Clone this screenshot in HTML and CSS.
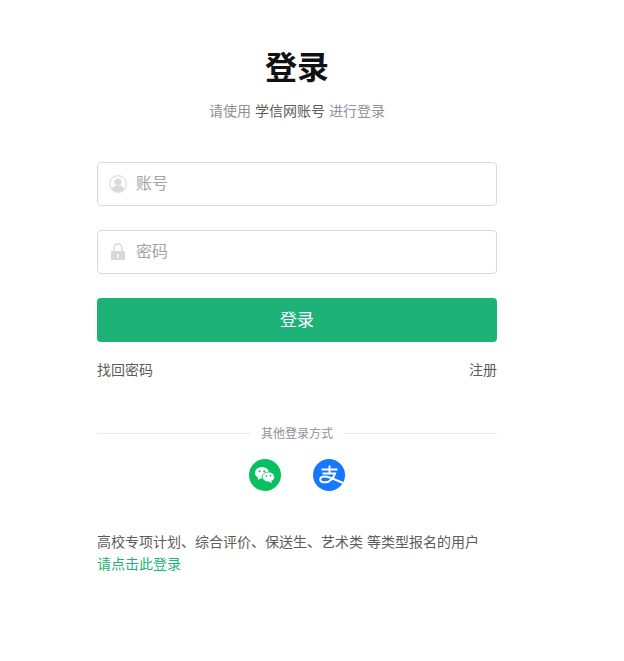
FILE: index.html
```html
<!DOCTYPE html>
<html lang="zh-CN">
<head>
    <meta charset="UTF-8">
    <meta name="viewport" content="width=device-width, initial-scale=1.0">
    <title>登录</title>
    <link rel="stylesheet" href="styles.css">
</head>
<body>
    <div class="container">
        <h1 class="title">登录</h1>
        <p class="subtitle">请使用 <span class="subtitle-strong">学信网账号</span> 进行登录</p>

        <form class="login-form">
            <label class="field">
                <svg class="field-icon field-icon-user" width="18" height="18" viewBox="0 0 18 18">
                    <circle cx="9" cy="9" r="8.300" fill="#fff" stroke="#dcdcdc" stroke-width="1.200"/>
                    <circle cx="9" cy="7" r="3.600" fill="#d9d9d9"/>
                    <path d="M2.900 14.400c.8-2.800 3.300-3.800 6.100-3.800s5.300 1 6.100 3.800A7.900 7.900 0 0 1 9 16.900a7.900 7.900 0 0 1-6.100-2.500z" fill="#d9d9d9"/>
                </svg>
                <input class="field-input" type="text" placeholder="账号">
            </label>
            <label class="field">
                <svg class="field-icon" width="18" height="18" viewBox="0 0 18 18">
                    <path d="M5 8.500V5a4 4 0 0 1 8 0v3.500" fill="none" stroke="#d9d9d9" stroke-width="1.400"/>
                    <path d="M2 8h14v9H2z" fill="#d9d9d9"/>
                    <rect x="8.200" y="11.500" width="1.600" height="3" fill="#fff"/>
                </svg>
                <input class="field-input" type="password" placeholder="密码">
            </label>
            <button class="submit-btn" type="button">登录</button>
        </form>

        <div class="links">
            <a href="#">找回密码</a>
            <a href="#">注册</a>
        </div>

        <div class="divider"><span>其他登录方式</span></div>

        <div class="socials">
            <a class="social social-wechat" href="#" aria-label="微信">
                <svg width="32" height="32" viewBox="0 0 32 32">
                    <ellipse cx="13" cy="13.800" rx="7.200" ry="5.800" fill="#fff"/>
                    <path d="M9.300 18l-.7 3 3.600-2z" fill="#fff"/>
                    <ellipse cx="19.400" cy="18" rx="6.200" ry="5" fill="#fff" stroke="#07c160" stroke-width=".8"/>
                    <path d="M22 22l1.300 2.200-3.500-1.500z" fill="#fff"/>
                    <circle cx="10.600" cy="12.200" r="1" fill="#07c160"/>
                    <circle cx="15.200" cy="12.200" r="1" fill="#07c160"/>
                    <circle cx="17.300" cy="16.800" r=".9" fill="#07c160"/>
                    <circle cx="21.500" cy="16.800" r=".9" fill="#07c160"/>
                </svg>
            </a>
            <a class="social social-alipay" href="#" aria-label="支付宝">
                <svg width="32" height="32" viewBox="0 0 32 32">
                    <path d="M8.500 10.500h16M16.500 6.500v8M9.500 14.500h12.500c-1.300 4.300-5 8.800-9.800 8.800-3 0-5-1-5-2.900 0-1.900 1.900-3 4.300-3 5 0 11 3.300 19.700 7.300" fill="none" stroke="#fff" stroke-width="2"/>
                </svg>
            </a>
        </div>

        <p class="notice">
            高校专项计划、综合评价、保送生、艺术类 等类型报名的用户<br>
            <a class="notice-link" href="#">请点击此登录</a>
        </p>
    </div>
</body>
</html>
```
FILE: styles.css
```css
* { box-sizing: border-box; }
body { margin: 0; background: #fff; color: #5c5c5c; font-family: "Liberation Sans", "Noto Sans CJK SC", sans-serif; font-size: 14px; }
a { text-decoration: none; color: inherit; }

.container { width: 400px; margin-left: 97px; padding-top: 46px; }

.title { margin: 0; height: 44px; line-height: 44px; text-align: center; font-size: 32px; font-weight: 700; color: #111; }
.subtitle { margin: 10px 0 0; line-height: 22px; text-align: center; color: #8c939d; }
.subtitle-strong { color: #5c5c5c; }

.login-form { margin-top: 40px; display: flex; flex-direction: column; }
.field { display: flex; align-items: center; height: 44px; margin-bottom: 24px; padding-left: 11px; border: 1px solid #d9d9d9; border-radius: 4px; }
.field-icon { flex: none; }
.field-icon-user { margin-bottom: 1px; }
.field-input { flex: 1; min-width: 0; margin-left: 9px; border: none; outline: none; padding: 0; font: inherit; font-size: 16px; color: #333; }
.field-input::placeholder { color: #a3a3a3; opacity: 1; }

.submit-btn { height: 44px; border: none; border-radius: 4px; padding: 0 0 4px; background: #1db277; color: #fff; font: inherit; font-size: 17px; cursor: pointer; }

.links { display: flex; justify-content: space-between; margin-top: 17px; line-height: 22px; }

.divider { display: flex; align-items: center; gap: 10px; margin-top: 42px; height: 20px; font-size: 12px; color: #8c939d; }
.divider span { margin-bottom: 1px; }
.divider::before, .divider::after { content: ""; flex: 1; height: 1px; background: #eaeaea; }

.socials { display: flex; justify-content: center; gap: 32px; margin-top: 16px; }
.social { display: block; width: 32px; height: 32px; border-radius: 50%; overflow: hidden; }
.social svg { display: block; }
.social-wechat { background: #07c160; }
.social-alipay { background: #1677ff; }

.notice { margin: 40px 0 0; line-height: 22px; }
.notice-link { color: #1db277; }
```
